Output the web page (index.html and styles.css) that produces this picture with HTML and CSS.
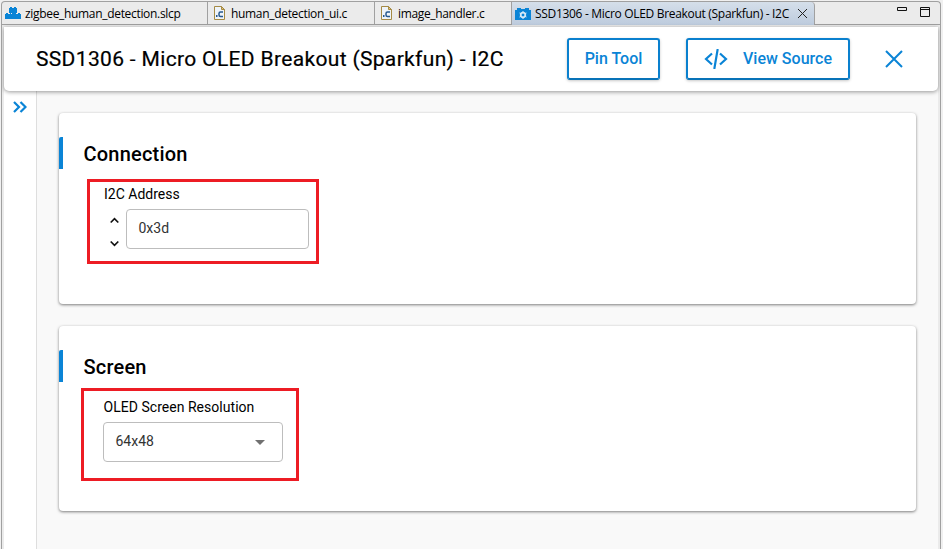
FILE: index.html
```html
<!DOCTYPE html>
<html lang="en">
<head>
<meta charset="utf-8">
<title>Component Editor</title>
<link rel="stylesheet" href="styles.css">
</head>
<body>
<div class="window">
  <div class="tabs">
    <div class="tab tab-project">
      <svg class="tab-icon" width="16" height="12" viewBox="0 0 16 12" fill="#0a84d6"><path d="M4 1h1V0h2v1h2V0h2v1h1v5H4zM0 7h1V6h2v1h2V6h1v1h1.700v5H0zM8.300 7H9V6h2v1h2V6h2v1h1v5H8.300zM7 6h2v6H7z"/></svg>
      <span>zigbee_human_detection.slcp</span>
    </div>
    <div class="tab tab-ui">
      <svg class="tab-icon" width="12" height="14" viewBox="0 0 12 14"><path d="M.5.5h7l3 3v10H.5z" fill="#eef4fa" stroke="#a58a45"/><path d="M7.500.5v3h3z" fill="#e5c675" stroke="#a58a45"/><path d="M2 9h1.500v2H2z" fill="#26588f"/><path d="M9 6H6.500q-1.500 0-1.500 1.500v1.500q0 1.500 1.500 1.500H9" fill="none" stroke="#26588f" stroke-width="1.500"/></svg>
      <span>human_detection_ui.c</span>
    </div>
    <div class="tab tab-image">
      <svg class="tab-icon" width="12" height="14" viewBox="0 0 12 14"><path d="M.5.5h7l3 3v10H.5z" fill="#eef4fa" stroke="#a58a45"/><path d="M7.500.5v3h3z" fill="#e5c675" stroke="#a58a45"/><path d="M2 9h1.500v2H2z" fill="#26588f"/><path d="M9 6H6.500q-1.500 0-1.500 1.500v1.500q0 1.500 1.500 1.500H9" fill="none" stroke="#26588f" stroke-width="1.500"/></svg>
      <span>image_handler.c</span>
    </div>
    <div class="tab tab-active">
      <svg class="tab-icon" width="16" height="12" viewBox="0 0 16 12"><path d="M2 2V0h4v1h4V0h4v2h2v10H0V2z" fill="#0a84d6"/><circle cx="8" cy="7" r="2.300" fill="none" stroke="#d5e8f6" stroke-width="1.700"/><path d="M8 3v8M4.500 5l7 4M4.500 9l7-4" stroke="#d5e8f6"/><circle cx="8" cy="7" r="1.300" fill="#0a84d6"/></svg>
      <span>SSD1306 - Micro OLED Breakout (Sparkfun) - I2C</span>
      <svg class="tab-close" width="9" height="9" viewBox="0 0 9 9" stroke="#222"><path d="M0 0l9 9M9 0L0 9"/></svg>
    </div>
    <div class="window-controls">
      <svg width="34" height="12" viewBox="0 0 34 12" fill="none" stroke="#111"><path d="M.5.500h9v3h-9zM23.500.500h9v9h-9zM23.500 2.500h9"/></svg>
    </div>
  </div>
  <div class="editor">
    <header class="header">
      <h1>SSD1306 - Micro OLED Breakout (Sparkfun) - I2C</h1>
      <button class="button pin">Pin Tool</button>
      <button class="button source"><svg width="24" height="20" viewBox="0 0 24 20" fill="none" stroke="#0a84d6" stroke-width="2.200"><path d="M8 4.500L2 10l6 5.500M16 4.500l6 5.500-6 5.500M13.700 0l-3.400 20"/></svg><span>View Source</span></button>
      <svg class="close" width="18" height="18" viewBox="0 0 18 18" fill="none" stroke="#0a84d6" stroke-width="2"><path d="M1 1l16 16M17 1L1 17"/></svg>
    </header>
    <div class="body">
      <aside class="sidebar"><svg width="14" height="12" viewBox="0 0 14 12" fill="none" stroke="#0a84d6" stroke-width="2.200"><path d="M1 1l5 5-5 5M7.500 1l5 5-5 5"/></svg></aside>
      <main class="content">
        <section class="card connection">
          <h2>Connection</h2>
          <div class="highlight address">
            <label>I2C Address</label>
            <div class="field-row">
              <svg class="stepper" width="9" height="30" viewBox="0 0 9 30" fill="none" stroke="#111" stroke-width="1.700"><path d="M.7 5.500l3.800-3.800L8.300 5.500M.7 24.500l3.800 3.800 3.800-3.800"/></svg>
              <div class="field input">0x3d</div>
            </div>
          </div>
        </section>
        <section class="card screen">
          <h2>Screen</h2>
          <div class="highlight resolution">
            <label>OLED Screen Resolution</label>
            <div class="field select"><span>64x48</span><svg width="10" height="5" viewBox="0 0 10 5" fill="#707070"><path d="M0 0h10L5 5z"/></svg></div>
          </div>
        </section>
      </main>
    </div>
  </div>
</div>
</body>
</html>
```
FILE: styles.css
```css
* { box-sizing: border-box; }
body { margin: 0; height: 549px; overflow: hidden; background: #f0f0f0; font-family: Roboto, sans-serif; color: #000; }
.window { margin: 1px 2px 0 1px; height: 548px; border: 1px solid #a0a0a0; border-bottom: 0; border-radius: 4px 4px 0 0; background: #ebebeb; overflow: hidden; }
.tabs { display: flex; height: 23px; border-bottom: 1px solid #a0a0a0; font: 12px/22px "Open Sans", sans-serif; white-space: nowrap; }
.tab { display: flex; align-items: center; border-right: 1px solid #a0a0a0; }
.tab span { padding-top: 1px; }
.tab-icon { flex: none; }
.tab-project { width: 206px; padding-left: 3px; gap: 4px; letter-spacing: -.32px; }
.tab-ui { width: 167px; padding-left: 6px; gap: 5px; letter-spacing: -.32px; }
.tab-image { width: 137px; padding-left: 6px; gap: 5px; letter-spacing: -.35px; }
.tab-active { width: 303px; height: 23px; padding-left: 3px; gap: 4px; background: linear-gradient(#d5dfea, #bdcbdd); border-radius: 0 4px 0 0; letter-spacing: -.31px; }
.tab-close { margin-left: 5px; }
.window-controls { margin: 5px 9px 0 auto; line-height: 0; }
.editor { display: flex; flex-direction: column; height: 524px; margin: 2px 2px 0 2px; background: #f9f9f9; }
.header { display: flex; align-items: center; height: 64px; padding-left: 32px; flex: none; background: #fff; border-radius: 0 0 5px 5px; box-shadow: 0 1px 4px rgba(0,0,0,.4); position: relative; }
h1 { margin: 0; width: 531px; font-size: 21px; line-height: 24px; font-weight: 400; letter-spacing: .34px; white-space: nowrap; -webkit-text-stroke: .2px #000; }
.button { display: flex; align-items: center; justify-content: center; height: 42px; border: 2px solid #0a80ce; border-bottom-color: #0873b8; border-radius: 3px; padding: 0; background: #fff; color: #0a84d6; font: 500 16px/20px Roboto, sans-serif; box-shadow: 0 1px 3px rgba(0,0,0,.22); }
.pin { width: 93px; }
.source { width: 164px; margin-left: 26px; gap: 15px; }
.close { margin-left: 35px; }
.body { display: flex; flex: 1; min-height: 0; }
.sidebar { width: 33px; padding: 10px 0 0 9px; border-right: 1px solid #dedede; background: #fff; line-height: 0; }
.content { flex: 1; padding: 22px 22px 0 22px; }
.card { background: #fff; border-radius: 4px; box-shadow: 0 1px 3px rgba(0,0,0,.5); padding-top: 24px; }
.connection { height: 191px; margin-bottom: 22px; }
.screen { height: 185px; }
h2 { margin: 0; height: 32px; border-left: 4px solid #0a84d6; border-radius: 2px 0 0 0; padding-left: 20.5px; font-size: 20px; font-weight: 500; line-height: 35px; letter-spacing: .2px; }
.highlight { border: 3px solid #ed1c24; font-size: 14px; }
.address { width: 232px; height: 85px; margin: 10px 0 0 28px; padding: 4px 0 0 14px; }
.resolution { width: 218px; height: 93px; margin: 6px 0 0 22px; padding: 8px 0 0 19px; }
label { display: block; height: 16px; line-height: 16px; }
.resolution label { padding-left: .5px; letter-spacing: .03px; }
.field-row { display: flex; margin-top: 7px; }
.stepper { margin: 8px 7px 0 6px; }
.field { height: 40px; border: 1px solid #bdbdbd; border-radius: 4px; padding-left: 11.5px; line-height: 37px; color: #333; }
.input { width: 183px; }
.select { display: flex; align-items: center; justify-content: space-between; width: 180px; margin-top: 7px; padding-right: 17.5px; }
.select span { margin-top: -1px; }
```
